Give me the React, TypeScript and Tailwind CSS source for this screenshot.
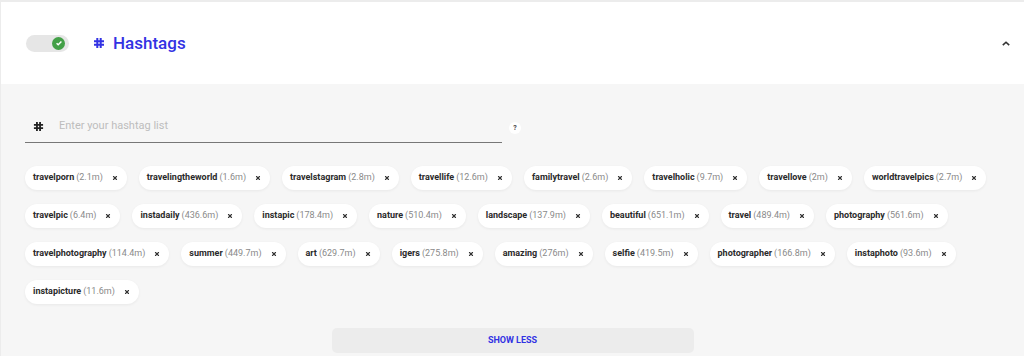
import { X } from "lucide-react";

const tags: [string, string][] = [
  ["travelporn", "2.1m"],
  ["travelingtheworld", "1.6m"],
  ["travelstagram", "2.8m"],
  ["travellife", "12.6m"],
  ["familytravel", "2.6m"],
  ["travelholic", "9.7m"],
  ["travellove", "2m"],
  ["worldtravelpics", "2.7m"],
  ["travelpic", "6.4m"],
  ["instadaily", "436.6m"],
  ["instapic", "178.4m"],
  ["nature", "510.4m"],
  ["landscape", "137.9m"],
  ["beautiful", "651.1m"],
  ["travel", "489.4m"],
  ["photography", "561.6m"],
  ["travelphotography", "114.4m"],
  ["summer", "449.7m"],
  ["art", "629.7m"],
  ["igers", "275.8m"],
  ["amazing", "276m"],
  ["selfie", "419.5m"],
  ["photographer", "166.8m"],
  ["instaphoto", "93.6m"],
  ["instapicture", "11.6m"],
];

function Hash({ className }: { className: string }) {
  return (
    <svg viewBox="0 0 12 12" className={className} fill="none" stroke="currentColor" strokeWidth="2" strokeLinecap="butt">
      <path d="M4.3 1v10M7.7 1v10M1 4.2h10M1 7.8h10" />
    </svg>
  );
}

function Chip({ name, count }: { name: string; count: string }) {
  return (
    <div className="flex h-6 items-center rounded-full bg-white pl-[8px] pr-[9px] text-[9px] shadow-[0_1px_3px_rgba(0,0,0,0.06)]">
      <span className="font-bold text-[#2a2a2a]">{name}</span>
      <span className="ml-[2px] text-[#8a8a8a]">({count})</span>
      <X className="ml-[9px] h-[6px] w-[6px] text-[#333]" strokeWidth={4.5} />
    </div>
  );
}

export default function App() {
  return (
    <div
      className="h-[356px] w-[1024px] overflow-hidden border-t-2 border-l border-[#ececec] bg-[#f6f6f6]"
      style={{ fontFamily: "Roboto, 'Liberation Sans', sans-serif" }}
    >
      {/* header */}
      <div className="flex h-[82px] items-center bg-white pl-[25px] pr-[14px]">
        <div className="flex h-[17px] w-[43px] items-center justify-end rounded-full bg-[#e6e6e6] pr-[4px]">
          <div className="flex h-[13px] w-[13px] items-center justify-center rounded-full bg-[#43a047]">
            <svg viewBox="0 0 10 10" className="h-[8px] w-[8px]" fill="none" stroke="white" strokeWidth="1.8">
              <path d="M2 5.2l2 2 4-4.2" />
            </svg>
          </div>
        </div>
        <div className="ml-6 flex items-center text-[#3232e3]">
          <Hash className="h-[12px] w-[12px]" />
          <span className="ml-[8px] text-[17px] font-medium leading-none">Hashtags</span>
        </div>
        <div className="ml-auto">
          <svg viewBox="0 0 10 6" className="h-[5px] w-[8px]" fill="none" stroke="#333" strokeWidth="2">
            <path d="M1 5l4-3.6L9 5" />
          </svg>
        </div>
      </div>

      {/* body */}
      <div className="px-[24px]">
        <div className="mt-[26px] flex items-end">
          <div className="flex h-[33px] w-[477px] items-center border-b border-[#777] pl-[8px]">
            <Hash className="h-[11px] w-[11px] text-[#222]" />
            <span className="ml-[15px] text-[11px] text-[#bdbdbd]">Enter your hashtag list</span>
          </div>
          <div className="mb-[9px] ml-[7px] flex h-[12px] w-[12px] items-center justify-center rounded-full bg-white text-[7px] font-bold text-[#444]">
            ?
          </div>
        </div>

        <div className="mt-[23px] flex w-[975px] flex-wrap gap-x-3 gap-y-[14px]">
          {tags.map(([n, c]) => (
            <Chip key={n} name={n} count={c} />
          ))}
        </div>

        <div className="mt-[24px] flex justify-center">
          <div className="flex h-[25px] w-[362px] items-center justify-center rounded-[5px] bg-[#ececec] text-[9px] font-bold text-[#3232e3]">
            SHOW LESS
          </div>
        </div>
      </div>
    </div>
  );
}
